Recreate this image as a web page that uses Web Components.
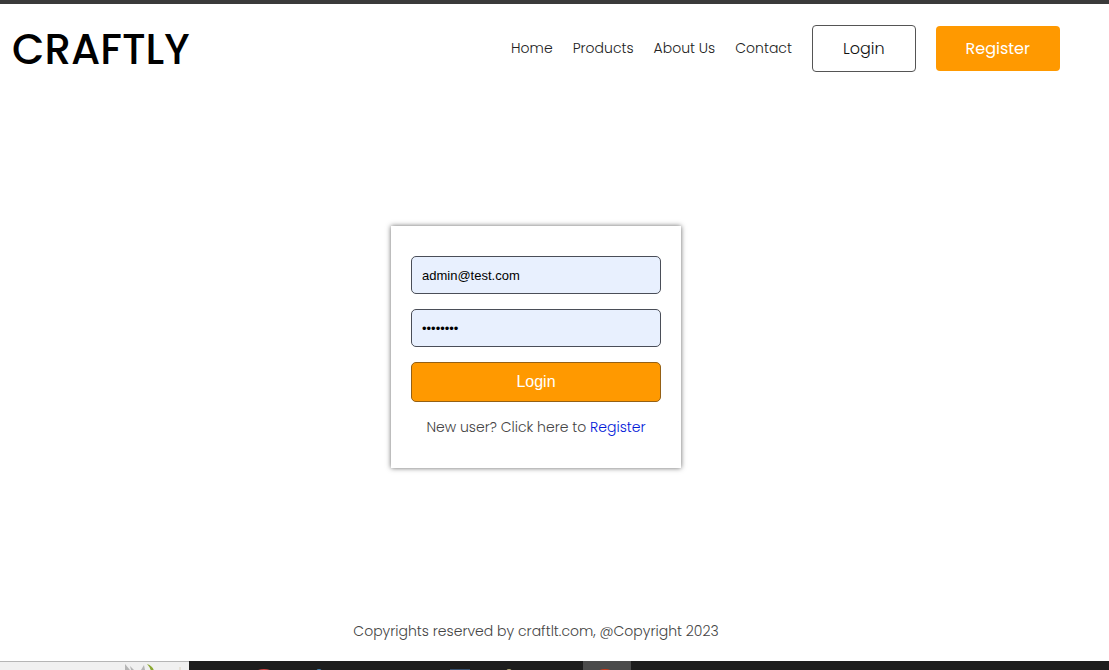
<!DOCTYPE html>
<html lang="en">
<head>
<meta charset="utf-8">
<title>Craftly - Login</title>
<style>
  body { margin: 0; background: #fff; font-family: Poppins, Inter, sans-serif; font-weight: 300; font-size: 14px; line-height: 21px; color: #333; }
</style>
</head>
<body>
<craftly-page>
  <craftly-header slot="header"></craftly-header>
  <login-card></login-card>
  <craftly-footer slot="footer">Copyrights reserved by craftlt.com, @Copyright 2023</craftly-footer>
  <task-bar slot="taskbar"></task-bar>
</craftly-page>

<template id="page-template">
  <style>
    :host { display: flex; flex-direction: column; min-height: 100vh; box-sizing: border-box; border-top: 4px solid #3a3a3a; }
    main { flex: 1; display: flex; align-items: center; justify-content: center; padding-right: 37px; }
  </style>
  <slot name="header"></slot>
  <main><slot></slot></main>
  <slot name="footer"></slot>
  <slot name="taskbar"></slot>
</template>

<template id="header-template">
  <style>
    :host { display: block; }
    header { display: flex; align-items: center; justify-content: space-between; padding: 21px 49px 21px 12px; }
    .logo { padding-top: 2px; font-size: 42px; line-height: 45px; font-weight: 500; color: #000; text-decoration: none; }
    nav { display: flex; align-items: center; gap: 20px; }
    nav a { color: #222; text-decoration: none; }
    button { font: inherit; font-size: 16px; line-height: 25px; padding: 10px 30px; border-radius: 4px; }
    .outline { background: #fff; border: 1px solid #555; color: #111; }
    .solid { background: #ff9900; border: 0; color: #fff; font-weight: 400; }
  </style>
  <header>
    <a class="logo" href="#">CRAFTLY</a>
    <nav>
      <a href="#home">Home</a>
      <a href="#products">Products</a>
      <a href="#about">About Us</a>
      <a href="#contact">Contact</a>
      <button class="outline" type="button">Login</button>
      <button class="solid" type="button">Register</button>
    </nav>
  </header>
</template>

<template id="card-template">
  <style>
    :host { display: block; width: 290px; box-sizing: border-box; padding: 30px 20px; background: #fff; box-shadow: 0 0 5px #666; }
    form { display: flex; flex-direction: column; gap: 15px; }
    input, button { box-sizing: border-box; width: 100%; border-radius: 5px; font-family: "Liberation Sans", Arial, sans-serif; }
    input { height: 38px; padding: 0 10px; border: 1px solid #4a4e58; background: #e8f0fe; color: #000; font-size: 13px; }
    button { height: 40px; border: 1px solid #946015; background: #ff9900; color: #fff; font-size: 16px; }
    p { margin: 0; text-align: center; color: #444; }
    a { color: #0018d8; text-decoration: none; }
  </style>
  <form>
    <input type="email" aria-label="Email" value="admin@test.com">
    <input type="password" aria-label="Password" value="password">
    <button type="button">Login</button>
    <p>New user? Click here to <a href="#register">Register</a></p>
  </form>
</template>

<template id="footer-template">
  <style>
    :host { display: block; }
    footer { padding: 20px 37px 19px 0; text-align: center; color: #444; }
  </style>
  <footer><slot></slot></footer>
</template>

<template id="taskbar-template">
  <style>
    :host { display: flex; height: 9px; background: #1d1d1d; overflow: hidden; }
    svg { display: block; flex: none; }
    .search { width: 189px; margin-right: 58px; box-sizing: border-box; background: #f0f0f0; border-top: 1px solid #b5b5b5; }
    .search svg { margin-left: 120px; }
    .active { background: #4b4b4b; }
  </style>
  <div class="search">
    <svg width="69" height="8" viewBox="0 0 69 8"><path d="M5 2l5 6H5zM10 4l4 4h-3zM21 8l3-5 1 5z" fill="#b5b5b5"/><path d="M27 2q6 2 7 7h-3q-1-4-4-7z" fill="#8aa832"/><path d="M60 5v3" stroke="#d8d0bc"/></svg>
  </div>
  <svg width="48" height="9" viewBox="0 0 48 9"><ellipse cx="17" cy="12" rx="9" ry="4" fill="#d04848"/></svg>
  <svg width="48" height="9" viewBox="0 0 48 9"><circle cx="24" cy="11" r="3" fill="#4381b0"/></svg>
  <svg width="48" height="9"></svg>
  <svg width="48" height="9"></svg>
  <svg width="48" height="9" viewBox="0 0 48 9"><rect x="11" y="8" width="20" height="4" fill="#37506e"/></svg>
  <svg width="48" height="9" viewBox="0 0 48 9"><circle cx="22" cy="11" r="3" fill="#b3aa78"/></svg>
  <svg width="48" height="9"></svg>
  <svg class="active" width="48" height="9" viewBox="0 0 48 9"><ellipse cx="22" cy="12" rx="8" ry="4" fill="#cc3c1c"/></svg>
</template>

<script>
  const define = (name, templateId) => customElements.define(name, class extends HTMLElement {
    constructor() {
      super();
      this.attachShadow({ mode: "open" }).append(document.getElementById(templateId).content.cloneNode(true));
    }
  });
  define("craftly-page", "page-template");
  define("craftly-header", "header-template");
  define("login-card", "card-template");
  define("craftly-footer", "footer-template");
  define("task-bar", "taskbar-template");
</script>
</body>
</html>
